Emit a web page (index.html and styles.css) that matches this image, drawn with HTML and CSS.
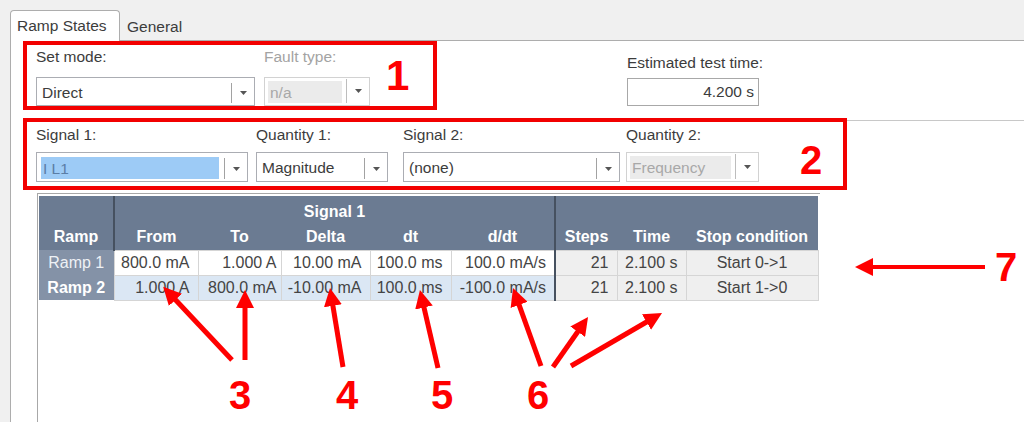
FILE: index.html
```html
<!DOCTYPE html>
<html lang="en">
<head>
    <meta charset="UTF-8">
    <meta name="viewport" content="width=device-width, initial-scale=1.0">
    <title>Ramp States</title>
    <link rel="stylesheet" href="styles.css">
</head>
<body>
    <div class="window">
        <div class="tabs">
            <div class="tab active">Ramp States</div>
            <div class="tab">General</div>
        </div>
        <div class="panel">
            <div class="top-row">
                <div class="group group-mode">
                    <div class="field f-mode">
                        <label>Set mode:</label>
                        <div class="combo">
                            <span class="combo-text">Direct</span>
                            <span class="combo-btn"><svg width="7" height="4" viewBox="0 0 7 4"><path d="M0 0h7L3.5 4z"/></svg></span>
                        </div>
                    </div>
                    <div class="field f-fault disabled">
                        <label class="off">Fault type:</label>
                        <div class="combo">
                            <span class="combo-text">n/a</span>
                            <span class="combo-btn"><svg width="7" height="4" viewBox="0 0 7 4"><path d="M0 0h7L3.5 4z"/></svg></span>
                        </div>
                    </div>
                    <span class="callout c1">1</span>
                </div>
                <div class="field f-est">
                    <label>Estimated test time:</label>
                    <div class="output">4.200 s</div>
                </div>
            </div>

            <div class="signal-row">
                <div class="group group-signal">
                    <div class="field f-s1">
                        <label>Signal 1:</label>
                        <div class="combo">
                            <span class="combo-text sel">I L1</span>
                            <span class="combo-btn"><svg width="7" height="4" viewBox="0 0 7 4"><path d="M0 0h7L3.5 4z"/></svg></span>
                        </div>
                    </div>
                    <div class="field f-q1">
                        <label>Quantity 1:</label>
                        <div class="combo">
                            <span class="combo-text">Magnitude</span>
                            <span class="combo-btn"><svg width="7" height="4" viewBox="0 0 7 4"><path d="M0 0h7L3.5 4z"/></svg></span>
                        </div>
                    </div>
                    <div class="field f-s2">
                        <label>Signal 2:</label>
                        <div class="combo">
                            <span class="combo-text">(none)</span>
                            <span class="combo-btn"><svg width="7" height="4" viewBox="0 0 7 4"><path d="M0 0h7L3.5 4z"/></svg></span>
                        </div>
                    </div>
                    <div class="field f-q2 disabled">
                        <label>Quantity 2:</label>
                        <div class="combo">
                            <span class="combo-text">Frequency</span>
                            <span class="combo-btn"><svg width="7" height="4" viewBox="0 0 7 4"><path d="M0 0h7L3.5 4z"/></svg></span>
                        </div>
                    </div>
                    <span class="callout c2">2</span>
                </div>
                <div class="rule"></div>
            </div>

            <div class="grid-box">
                <table class="ramps">
                    <colgroup>
                        <col class="w-ramp"><col class="w-from"><col class="w-to"><col class="w-delta"><col class="w-dt">
                        <col class="w-ddt"><col class="w-steps"><col class="w-time"><col class="w-stop">
                    </colgroup>
                    <thead>
                        <tr class="h1">
                            <th rowspan="2" class="split">Ramp</th>
                            <th colspan="5" class="grp split">Signal 1</th>
                            <th rowspan="2">Steps</th>
                            <th rowspan="2">Time</th>
                            <th rowspan="2">Stop condition</th>
                        </tr>
                        <tr class="h2">
                            <th>From</th>
                            <th>To</th>
                            <th>Delta</th>
                            <th>dt</th>
                            <th class="split">d/dt</th>
                        </tr>
                    </thead>
                    <tbody>
                        <tr>
                            <th class="rh">Ramp 1</th>
                            <td>800.0 mA</td>
                            <td class="to">1.000 A</td>
                            <td>10.00 mA</td>
                            <td>100.0 ms</td>
                            <td class="split">100.0 mA/s</td>
                            <td class="x">21</td>
                            <td class="x">2.100 s</td>
                            <td class="x c">Start 0-&gt;1</td>
                        </tr>
                        <tr class="cur">
                            <th class="rh">Ramp 2</th>
                            <td>1.000 A</td>
                            <td class="to">800.0 mA</td>
                            <td>-10.00 mA</td>
                            <td>100.0 ms</td>
                            <td class="split">-100.0 mA/s</td>
                            <td class="x">21</td>
                            <td class="x">2.100 s</td>
                            <td class="x c">Start 1-&gt;0</td>
                        </tr>
                    </tbody>
                </table>
            </div>
        </div>
    </div>

    <!-- annotation arrows and numbers -->
    <svg class="marks" width="1024" height="422" viewBox="0 0 1024 422">
        <defs>
            <marker id="head" markerWidth="18" markerHeight="18" refX="8" refY="9" orient="auto" markerUnits="userSpaceOnUse">
                <path d="M0 0L18 9L0 18z" fill="#f00"/>
            </marker>
        </defs>
        <line x1="232" y1="360" x2="170" y2="294"/>
        <line x1="245" y1="360" x2="245" y2="300"/>
        <line x1="343" y1="367" x2="331.6" y2="297.9"/>
        <line x1="438" y1="368" x2="422.2" y2="299.7"/>
        <line x1="541" y1="366" x2="516.4" y2="297.4"/>
        <line x1="553" y1="367" x2="582.3" y2="325.2"/>
        <line x1="571" y1="366" x2="653.4" y2="318"/>
        <line class="thin" x1="985" y1="267" x2="865" y2="267"/>
    </svg>
    <span class="callout mark c3">3</span>
    <span class="callout mark c4">4</span>
    <span class="callout mark c5">5</span>
    <span class="callout mark c6">6</span>
    <span class="callout mark c7">7</span>
</body>
</html>
```

FILE: styles.css
```css
* {
    box-sizing: border-box;
}
body {
    margin: 0;
    width: 1024px;
    height: 422px;
    overflow: hidden;
    position: relative;
    background: #f0f0f0;
    font-family: "Liberation Sans", Arial, sans-serif;
    font-size: 15.5px;
    color: #3c3c3c;
}
.window {
    height: 100%;
    padding: 10px 0 0 10px;
    display: flex;
    flex-direction: column;
}

/* tabs */
.tabs {
    display: flex;
    align-items: flex-start;
    height: 30px;
}
.tab {
    padding: 8px 0 0 7px;
    line-height: 18px;
}
.tab.active {
    position: relative;
    z-index: 1;
    width: 110px;
    height: 31px;
    padding: 6px 0 0 6px;
    background: #fff;
    border: 1px solid #adadad;
    border-bottom: none;
    border-radius: 4px 4px 0 0;
}
.panel {
    flex: 1;
    display: flex;
    flex-direction: column;
    background: #fff;
    border-top: 1px solid #adadad;
    border-left: 1px solid #adadad;
}

/* red groups */
.top-row {
    display: flex;
    align-items: flex-start;
}
.group {
    display: flex;
    align-items: flex-start;
    border: 4px solid #f20000;
}
.group-mode {
    width: 414px;
    height: 69px;
    margin-left: 12px;
    padding: 3px 0 0 9px;
}
.signal-row {
    display: flex;
    margin-top: 8px;
}
.group-signal {
    width: 824px;
    height: 72px;
    margin-left: 12px;
    padding: 4px 0 0 9px;
}
.rule {
    flex: 1;
    margin-top: 2px;
    border-top: 1px solid #c8c8c8;
}

/* fields */
.field {
    display: flex;
    flex-direction: column;
}
.field label {
    height: 18px;
    line-height: 18px;
    margin-bottom: 8px;
}
.group-mode .field label {
    margin-bottom: 11px;
}
.field label.off {
    color: #a3a3a3;
}
.f-mode { width: 219px; }
.f-fault { width: 106px; margin-left: 9px; }
.f-s1 { width: 212px; }
.f-q1 { width: 132px; margin-left: 8px; }
.f-s2 { width: 217px; margin-left: 15px; }
.f-q2 { width: 133px; margin-left: 6px; }

.f-est {
    margin: 13px 0 0 190px;
}
.f-est label {
    margin-bottom: 6px;
}
.output {
    width: 132px;
    height: 28px;
    border: 1px solid #a8a8a8;
    text-align: right;
    padding-right: 4px;
    line-height: 26px;
}

.combo {
    display: flex;
    height: 30px;
    padding: 3px 0 2px 3px;
    background: #fff;
    border: 1px solid #abadb3;
}
.group-mode .combo {
    height: 29px;
}
.combo-text {
    flex: 1;
    padding-left: 2px;
    line-height: 23px;
    white-space: nowrap;
}
.combo-text.sel {
    margin: 1px 5px 0 1px;
    background: #9dcbf6;
    color: #5b7ea6;
}
.combo-btn {
    width: 23px;
    margin-top: 2px;
    border-left: 1px solid #a2a2a2;
    display: flex;
    align-items: center;
    justify-content: center;
}
.combo-btn svg {
    fill: #555;
}
.disabled .combo {
    border-color: #d2d2d2;
}
.disabled .combo-text {
    margin-right: 4px;
    background: #ebebeb;
    color: #a8a8a8;
}
.disabled .combo-btn {
    margin-top: -2px;
    border-left-color: #bdbdbd;
}

/* big red callouts */
.callout {
    font-family: "Liberation Sans", Arial, sans-serif;
    font-weight: bold;
    font-size: 40px;
    line-height: 40px;
    color: #f00;
}
.c1 { margin: 8px 0 0 16px; font-size: 42px; }
.c2 { margin: 14px 0 0 41px; }

/* grid */
.grid-box {
    flex: 1;
    width: 783px;
    margin: 3px 0 0 26px;
    padding: 2px 0 0 1px;
    border-top: 1px solid #a8a8a8;
    border-left: 1px solid #a8a8a8;
}
.ramps {
    border-collapse: collapse;
    table-layout: fixed;
    width: 779px;
    font-size: 16px;
}
.w-ramp { width: 75px; }
.w-from { width: 84px; }
.w-to { width: 83px; }
.w-delta { width: 89px; }
.w-dt { width: 81px; }
.w-ddt { width: 104px; }
.w-steps { width: 62px; }
.w-time { width: 69px; }
.w-stop { width: 132px; }

.ramps th {
    padding: 0;
    line-height: 18px;
    background: #6b7b92;
    color: #fff;
    font-weight: bold;
    white-space: nowrap;
}
.h1 th {
    height: 29px;
}
.h2 th {
    height: 25px;
}
.ramps th[rowspan],
.ramps th.grp {
    vertical-align: bottom;
    padding-bottom: 4px;
}
.ramps td {
    height: 25px;
    padding: 0 8px 0 0;
    line-height: 18px;
    text-align: right;
    white-space: nowrap;
    color: #444;
    background: #fff;
    border: 1px solid #d5d5d5;
}
.ramps td.to {
    padding-right: 4px;
}
.ramps tbody th.rh {
    background: #8492a7;
    color: #eef1f5;
    font-weight: normal;
}
.ramps .cur th.rh {
    color: #fff;
    font-weight: bold;
}
.ramps .cur td {
    background: #dbe7f4;
}
.ramps td.x {
    background: #efefef;
}
.ramps td.c {
    text-align: center;
    padding: 0;
}
.ramps .split {
    border-right: 2px solid #465160;
}

/* annotation overlay */
.marks {
    position: absolute;
    left: 0;
    top: 0;
    pointer-events: none;
}
.marks line {
    stroke: #f00;
    stroke-width: 5;
    marker-end: url(#head);
}
.marks line.thin {
    stroke-width: 4;
}
.mark {
    position: absolute;
}
.c3 { left: 229px; top: 375px; }
.c4 { left: 336px; top: 375px; }
.c5 { left: 431px; top: 375px; }
.c6 { left: 527px; top: 375px; }
.c7 { left: 995px; top: 247px; }
```
